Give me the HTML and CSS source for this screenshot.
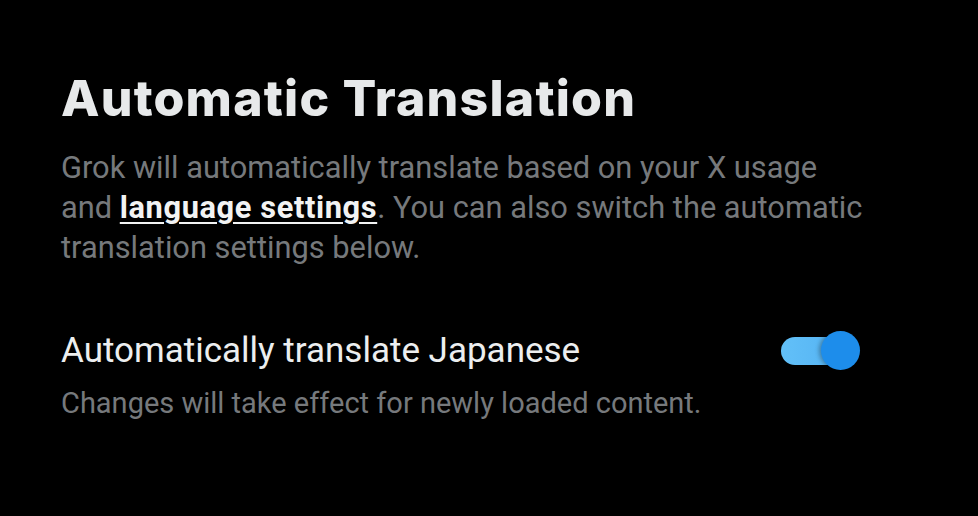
FILE: index.html
```html
<!DOCTYPE html>
<html lang="en">
<head>
<meta charset="utf-8">
<link rel="stylesheet" href="styles.css">
</head>
<body>
<main class="panel">
  <h1 class="title">Automatic Translation</h1>
  <p class="intro">Grok will automatically translate based on your X usage and <a class="link" href="#">language settings</a>. You can also switch the automatic translation settings below.</p>
  <div class="setting">
    <div class="setting-text">
      <div class="setting-label">Automatically translate Japanese</div>
      <div class="setting-hint">Changes will take effect for newly loaded content.</div>
    </div>
    <div class="toggle" role="switch" aria-checked="true">
      <span class="track"></span>
      <span class="knob"></span>
    </div>
  </div>
</main>
</body>
</html>
```
FILE: styles.css
```css
html, body {
  margin: 0;
  padding: 0;
  background: #000;
}
body {
  width: 978px;
  height: 516px;
  overflow: hidden;
  font-family: Roboto, "Liberation Sans", sans-serif;
}
.panel {
  padding: 68px 0 0 61px;
  width: 820px;
}
.title {
  margin: 0;
  font-family: Inter, Roboto, sans-serif;
  font-weight: 800;
  font-size: 50px;
  line-height: 60px;
  color: #e7e9ea;
  letter-spacing: 1.2px;
}
.intro {
  margin: 20px 0 0;
  font-size: 30.8px;
  line-height: 40px;
  color: #76797c;
  width: 805px;
}
.link {
  color: #f2f3f3;
  font-weight: 700;
  letter-spacing: 0.6px;
  text-decoration: underline;
  text-decoration-thickness: 2px;
  text-underline-offset: 4px;
}
.setting {
  display: flex;
  align-items: flex-start;
  justify-content: space-between;
  margin-top: 61px;
  width: 799px;
}
.setting-label {
  font-size: 35px;
  line-height: 44px;
  color: #eceeef;
}
.setting-hint {
  margin-top: 12px;
  font-size: 29px;
  line-height: 36px;
  color: #76797c;
}
.toggle {
  position: relative;
  width: 79px;
  height: 40px;
  margin-top: 2px;
}
.track {
  position: absolute;
  left: 0;
  top: 6px;
  width: 60px;
  height: 28px;
  border-radius: 14px;
  background: linear-gradient(90deg, #62c0f8, #55b3f3);
}
.knob {
  position: absolute;
  left: 40px;
  top: 0;
  width: 39px;
  height: 39px;
  border-radius: 50%;
  background: #1d8deb;
  box-shadow: -2px 0 4px rgba(0,0,0,0.3);
}
```
